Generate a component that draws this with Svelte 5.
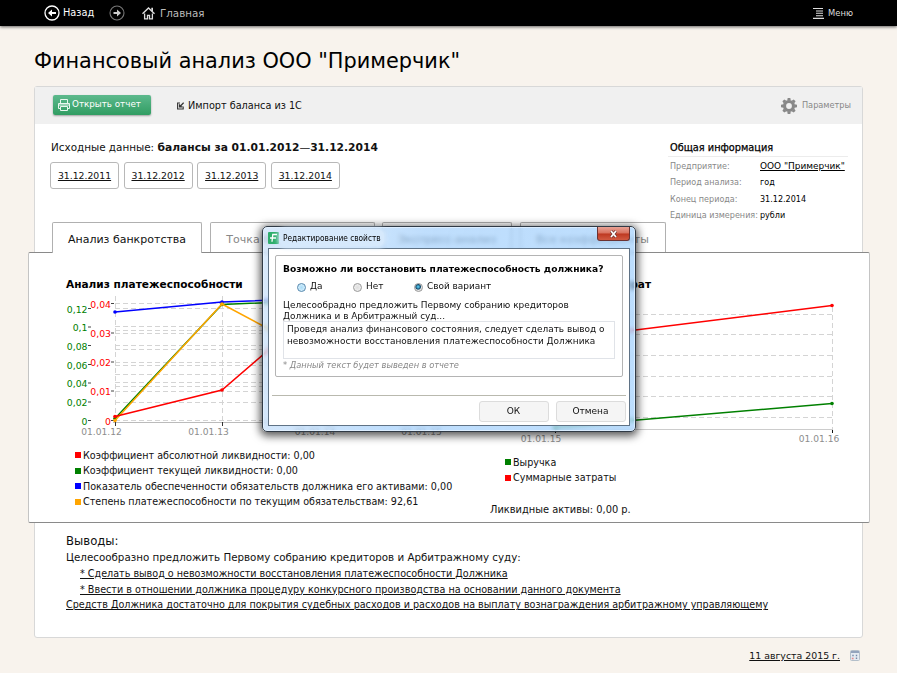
<script>
  const dates = ['31.12.2011', '31.12.2012', '31.12.2013', '31.12.2014'];

  const info = [
    { label: 'Период анализа:', value: 'год' },
    { label: 'Конец периода:', value: '31.12.2014' },
    { label: 'Единица измерения:', value: 'рубли' }
  ];

  const tabs = [
    { title: 'Анализ банкротства', width: 150, active: true },
    { title: 'Точка безубыточности', width: 165 },
    { title: 'Экспресс-анализ', width: 130 },
    { title: 'Все коэффициенты', width: 146 }
  ];

  const solvencyLegend = [
    { color: '#ff0000', text: 'Коэффициент абсолютной ликвидности: 0,00' },
    { color: '#008000', text: 'Коэффициент текущей ликвидности: 0,00' },
    { color: '#0000ff', text: 'Показатель обеспеченности обязательств должника его активами: 0,00' },
    { color: '#ffa500', text: 'Степень платежеспособности по текущим обязательствам: 92,61' }
  ];

  const costLegend = [
    { color: '#008000', text: 'Выручка' },
    { color: '#ff0000', text: 'Суммарные затраты' }
  ];

  const gridLeft = [8.5, 13.5, 31.5, 35.5, 38.5, 50.5, 54.5, 67.5, 70.5, 79.5, 87.5, 91.5, 96.5, 107.5, 125.5];
  const greenAxis = [
    ['0,12', 13.5], ['0,1', 32], ['0,08', 50.5], ['0,06', 69.5], ['0,04', 88], ['0,02', 107], ['0', 125.5]
  ];
  const redAxis = [
    ['0,04', 8.5], ['0,03', 38], ['0,02', 67], ['0,01', 96], ['0', 125.5]
  ];
  const gridRight = [19.5, 39.5, 60.5, 81.5, 101.5, 122.5];

  const series = [
    { color: '#0000ff', points: [[49, 17], [156, 7], [263, 3]] },
    { color: '#008000', points: [[49, 123.5], [156, 9.5], [263, 5]] },
    { color: '#ffa500', points: [[49, 125.5], [156, 9], [263, 66]] },
    { color: '#ff0000', points: [[49, 121.5], [156, 95], [263, 3]] }
  ];

  const costSeries = [
    { color: '#ff0000', points: [[75, 45], [352, 10.5]] },
    { color: '#008000', points: [[75, 132], [352, 108.5]] }
  ];

  const options = ['Да', 'Нет', 'Свой вариант'];
  let selected = $state('Свой вариант');
  let note = $state('Проведя анализ финансового состояния, следует сделать вывод о невозможности восстановления платежеспособности Должника');
</script>

<div class="app">
  <header class="bar">
    <button class="nav back">
      <svg width="16" height="16" viewBox="0 0 16 16"><circle cx="8" cy="8" r="7" fill="none" stroke="#fff" stroke-width="1.3" /><path d="M4 8l4-3.6V7h4v2H8v2.6z" fill="#fff" /></svg>
      <span>Назад</span>
    </button>
    <button class="nav forward" aria-label="Вперёд">
      <svg width="16" height="16" viewBox="0 0 16 16"><circle cx="8" cy="8" r="7" fill="none" stroke="#777" stroke-width="1.1" /><path d="M12 8L8 4.4V7H4.5v2H8v2.6z" fill="#ccc" /></svg>
    </button>
    <button class="nav home">
      <svg width="13" height="13" viewBox="0 0 13 13"><path d="M.5 6.8L6.5 1l6 5.8" fill="none" stroke="#ddd" stroke-width="1.4" /><path d="M9.3.8h1.7v4L9.3 3.2z" fill="#ddd" /><path d="M2.6 6.5v5.3h2.9V8.3h2v3.5h2.9V6.5" fill="none" stroke="#ddd" stroke-width="1.3" /></svg>
      <span>Главная</span>
    </button>
    <button class="nav menu">
      <svg width="11" height="11" viewBox="0 0 11 11"><path d="M0 .5h10M3 3h7M3 5.3h7M3 7.7h7M0 10.4h11" stroke="#ddd" stroke-width="1.1" /></svg>
      <span>Меню</span>
    </button>
  </header>

  <h1>Финансовый анализ ООО "Примерчик"</h1>

  <main class="panel">
    <div class="toolbar">
      <button class="open">
        <svg width="12" height="12" viewBox="0 0 12 12" fill="none" stroke="#e9f7ef" stroke-width="1"><path d="M2.5 4.5v-4h7v4M2.5 9.5h-2v-5h11v5h-2M2.5 7.5h7v4h-7zM1 6h10" /></svg>
        <span>Открыть отчет</span>
      </button>
      <button class="import">
        <svg width="7" height="8" viewBox="0 0 7 8" fill="none" stroke="#333"><path d="M3 1H.6v6h5.6V4.5" stroke-width="1.1" /><path d="M6.6.7L3 4.5M2.5 2.2v2.7h3" stroke-width="1.2" /></svg>
        <span>Импорт баланса из 1С</span>
      </button>
      <button class="params">
        <svg width="16" height="16" viewBox="-8 -8 16 16"><circle r="4.5" fill="none" stroke="#888" stroke-width="3.2" />{#each [0, 45, 90, 135, 180, 225, 270, 315] as angle}<path d="M-1.8-5.5L-1.3-8h2.6l.5 2.5z" fill="#888" transform="rotate({angle})" />{/each}</svg>
        <span>Параметры</span>
      </button>
    </div>

    <section class="summary">
      <div>
        <p class="source">Исходные данные: <b>балансы за 01.01.2012<span class="dash">—</span>31.12.2014</b></p>
        <div class="dates">
          {#each dates as date}<button>{date}</button>{/each}
        </div>
      </div>
      <aside>
        <h2>Общая информация</h2>
        <dl>
          <dt>Предприятие:</dt>
          <dd class="company">ООО "Примерчик"</dd>
          {#each info as row}
            <dt>{row.label}</dt>
            <dd>{row.value}</dd>
          {/each}
        </dl>
      </aside>
    </section>

    <nav class="tabs">
      {#each tabs as tab}
        <button class:active={tab.active} style:width="{tab.width}px">{tab.title}</button>
      {/each}
    </nav>

    <section class="card">
      <div class="col solvency">
        <h3>Анализ платежеспособности</h3>
        <svg class="chart" width="404" height="146" viewBox="0 0 404 146">
          <g stroke="#d4d4d4" stroke-dasharray="5 3">
            {#each gridLeft as y}<line x1="49" x2="380" y1={y} y2={y} />{/each}
            {#each [49.5, 156.5, 263.5] as x}<line x1={x} x2={x} y1="1" y2="127" />{/each}
          </g>
          <path d="M47 127.5h333" stroke="#bbb" />
          <path d="M49.5 127v4M156.5 127v4M263.5 127v4" stroke="#333" />
          <g class="green">
            {#each greenAxis as [label, y]}<text x="21.5" y={y + 4}>{label}</text><path d="M22 {y}h3" />{/each}
          </g>
          <g class="red">
            {#each redAxis as [label, y]}<text x="45" y={y + 4}>{label}</text><path d="M45 {y}h3" />{/each}
          </g>
          {#each series as line}
            <polyline points={line.points.join(' ')} fill="none" stroke={line.color} stroke-width="1.5" />
            {#each line.points as [x, y]}<circle cx={x} cy={y} r="1.8" fill={line.color} />{/each}
          {/each}
          <g class="time"><text x="35.5" y="140">01.01.12</text><text x="142.5" y="140">01.01.13</text><text x="249" y="140">01.01.14</text><text x="355.5" y="140">01.01.15</text></g>
        </svg>
        <ul>
          {#each solvencyLegend as item}<li><i style:background={item.color}></i>{item.text}</li>{/each}
        </ul>
      </div>
      <div class="col costs">
        <h3>Анализ выручки и затрат</h3>
        <svg class="chart" width="372" height="152" viewBox="0 0 372 152">
          <g stroke="#d4d4d4" stroke-dasharray="5 3">
            {#each gridRight as y}<line x1="75" x2="352" y1={y} y2={y} />{/each}
            <line x1="352.5" x2="352.5" y1="12" y2="134" />
          </g>
          <path d="M75 134.5h278" stroke="#ccc" />
          <path d="M75.5 135v3M352.5 135v3" stroke="#111" />
          {#each costSeries as line}
            <polyline points={line.points.join(' ')} fill="none" stroke={line.color} stroke-width="1.5" />
            {#each line.points as [x, y]}<circle cx={x} cy={y} r="1.8" fill={line.color} />{/each}
          {/each}
          <g class="time"><text x="61" y="147">01.01.15</text><text x="339" y="147">01.01.16</text></g>
        </svg>
        <ul>
          {#each costLegend as item}<li><i style:background={item.color}></i>{item.text}</li>{/each}
        </ul>
        <p class="assets">Ликвидные активы: 0,00 р.</p>
      </div>
    </section>

    <section class="conclusions">
      <h4>Выводы:</h4>
      <p class="intro">Целесообразно предложить Первому собранию кредиторов и Арбитражному суду:</p>
      <p class="link sub one">* Сделать вывод о невозможности восстановления платежеспособности Должника</p>
      <p class="link sub two">* Ввести в отношении должника процедуру конкурсного производства на основании данного документа</p>
      <p class="link">Средств Должника достаточно для покрытия судебных расходов и расходов на выплату вознаграждения арбитражному управляющему</p>
    </section>
  </main>

  <footer>
    <span>11 августа 2015 г.</span>
    <svg width="10" height="11" viewBox="0 0 10 11"><rect x=".5" y=".5" width="9" height="10" rx="1" fill="#e4ebf2" stroke="#b4bfca" /><path d="M1 2h8" stroke="#7f93b0" stroke-width="1.6" /><path d="M2.3 5.5h1.4M5.8 5.5h1.4M5.8 8.3h1.4" stroke="#7488a8" stroke-width="1.4" /><path d="M1.8 8.5h1.8" stroke="#e48b8b" stroke-width="1.6" /></svg>
  </footer>

  <div class="dialog" role="dialog" aria-label="Редактирование свойств">
    <div class="titlebar">
      <svg width="11" height="12" viewBox="0 0 11 12"><rect width="11" height="12" rx="1" fill="#2fae6c" /><path d="M9 2.5H4.8L4 9.8M2 6h6" fill="none" stroke="#fff" stroke-width="1.3" /></svg>
      <span>Редактирование свойств</span>
      <button class="close" aria-label="Закрыть">
        <svg width="9" height="8" viewBox="0 0 9 8"><path d="M2 1l5 6M7 1L2 7" stroke="#6d3434" stroke-width="3" /><path d="M2 1l5 6M7 1L2 7" stroke="#fff" stroke-width="1.7" /></svg>
      </button>
    </div>
    <div class="body">
      <fieldset>
        <h5>Возможно ли восстановить платежеспособность должника?</h5>
        <div class="radios">
          {#each options as option}
            <label><input type="radio" name="choice" value={option} bind:group={selected} class:cool={option === 'Да'} />{option}</label>
          {/each}
        </div>
        <p class="lead">Целесообрадно предложить Первому собранию кредиторов<br />Должника и в Арбитражный суд...</p>
        <textarea bind:value={note} spellcheck="false"></textarea>
        <p class="hint">* Данный текст будет выведен в отчете</p>
      </fieldset>
      <hr />
      <div class="actions">
        <button>ОК</button>
        <button>Отмена</button>
      </div>
    </div>
  </div>
</div>

<style>
  :global(body) { background: #f8f3ed; }
  .app {
    position: relative;
    width: 897px;
    height: 673px;
    overflow: hidden;
    background: #f8f3ed;
    color: #111;
    font: 9.6px/15.5px "DejaVu Sans", Verdana, sans-serif;
  }
  .app :is(h1, h2, h3, h4, h5, p, ul, dl, dd, fieldset) { margin: 0; padding: 0; white-space: nowrap; }
  button { font: inherit; color: inherit; padding: 0; margin: 0; border: 0; background: none; box-sizing: border-box; white-space: nowrap; }
  svg { display: block; flex: none; }

  .bar { display: flex; align-items: center; height: 26px; padding: 0 44px; background: #000; box-shadow: 0 1px 3px #0009; }
  .nav { display: flex; align-items: center; gap: 4px; color: #fff; }
  .back { width: 51px; gap: 3px; font-size: 9.8px; }
  .forward { margin-left: 14px; }
  .home { margin-left: 17px; gap: 5px; color: #bbb; font-size: 10.3px; }
  .home span { padding-top: 1px; }
  .menu { margin-left: auto; color: #ddd; font: 8.4px "DejaVu Sans", sans-serif; }

  h1 { padding: 22px 0 0 34px !important; height: 38px; font: 20.85px/27px "DejaVu Sans", Verdana, sans-serif; color: #000; }

  .panel { box-sizing: border-box; width: 829px; height: 552px; margin-left: 34px; border: 1px solid #d8d8d8; border-radius: 3px; background: #fff; }
  .toolbar { display: flex; align-items: center; height: 37px; padding: 0 11px 0 18px; background: #f0f0f0; }
  .open { display: flex; align-items: center; gap: 2px; width: 98px; height: 20px; margin-bottom: 1px; padding: 0 0 0 5px; border-radius: 2px; color: #fff; font-size: 8.75px; background: linear-gradient(#5cb98d, #319d62); box-shadow: 0 1px 2px #0005; }
  .import { display: flex; align-items: center; gap: 4px; margin-left: 26px; padding-top: 1px; font-size: 9.7px; }
  .params { display: flex; align-items: center; gap: 5px; margin-left: auto; color: #888; font-size: 8.2px; }

  .summary { display: flex; justify-content: space-between; height: 98px; padding: 0 14px 0 15px; box-sizing: border-box; }
  .source { padding: 15.5px 0 7px 1px !important; font-size: 10.4px; }
  .source b { font-size: 10.72px; }
  .dash { font-weight: normal; }
  .dates { display: flex; gap: 4.6px; }
  .dates button { width: 69px; height: 27px; border: 1px solid #b8b8b8; border-radius: 3px; font-size: 9.3px; text-decoration: underline; text-underline-offset: 1px; }
  aside { width: 180px; padding-top: 16px; }
  h2 { height: 16px; padding-left: 2px !important; border-bottom: 1px solid #ececec; font: 9.75px/16px "DejaVu Sans", sans-serif; color: #000; -webkit-text-stroke: 0.25px #000; }
  dl { display: grid; grid-template-columns: 90px 1fr; grid-auto-rows: 16.4px; padding: 1px 0 0 2px !important; font: 8.95px/16px "DejaVu Sans Condensed", "DejaVu Sans", sans-serif; color: #000; }
  dt { color: #888; white-space: nowrap; }
  .company { font-family: "DejaVu Sans", sans-serif; text-decoration: underline; text-underline-offset: 1px; }

  .tabs { display: flex; gap: 7.5px; height: 30px; padding-left: 17px; }
  .tabs button { height: 30px; border: 1px solid #b0b0b0; border-bottom: 0; border-radius: 2px 2px 0 0; background: #fff; color: #888; font-size: 11px; padding-top: 4px; }
  .tabs .active { position: relative; z-index: 1; height: 31px; padding-top: 3px; color: #111; }

  .card { display: flex; box-sizing: border-box; width: 842px; height: 271px; margin: 0 0 0 -7px; padding: 23px 0 0 37px; border: 1px solid #c4c4c4; border-top-color: #8a8a8a; border-bottom-color: #8a8a8a; border-radius: 2px; background: #fff; }
  .col { flex: none; width: 414px; }
  h3 { height: 19px; font: bold 10.57px/16px "DejaVu Sans", sans-serif; color: #000; }
  .costs h3 { padding-left: 16px !important; }
  .chart text { font: 9.3px "DejaVu Sans", sans-serif; }
  .green text { fill: #008000; text-anchor: end; }
  .red text { fill: #ff0000; text-anchor: end; }
  .green path, .red path { stroke: #444; }
  .chart .time text { fill: #8d8d8d; text-anchor: middle; font-size: 9.1px; }
  ul { list-style: none; padding: 6.5px 0 0 9px !important; }
  .costs ul { padding: 7.5px 0 0 25px !important; }
  li { display: flex; align-items: center; gap: 2px; height: 15.5px; font-size: 9.61px; }
  li i { width: 6px; height: 6px; }
  .assets { padding: 16px 0 0 10px !important; font-size: 9.85px; }

  .conclusions { padding: 10px 0 0 31px; line-height: 15.8px; }
  h4 { height: 17px; font: 11.7px/16px "DejaVu Sans", sans-serif; }
  .intro { font-size: 10.31px; }
  .link { text-decoration: underline; text-underline-offset: 1px; }
  .sub { padding-left: 14px !important; }
  .two { font-size: 9.65px; }

  footer { display: flex; justify-content: flex-end; align-items: center; gap: 10px; height: 15px; padding: 10px 37px 0 0; font-size: 9.4px; }
  footer span { text-decoration: underline; text-underline-offset: 1px; }

  .dialog {
    position: absolute;
    left: 262px;
    top: 226px;
    box-sizing: border-box;
    width: 374px;
    height: 206px;
    padding: 0 5px 5px;
    border: 1px solid #303a45;
    border-radius: 5px;
    background: linear-gradient(100deg, #c4ddf8a0, #8ec5fb90 40%, #94c9fca0);
    backdrop-filter: blur(2px);
    box-shadow: inset 0 0 0 1px #e8f4ffb0, 0 2px 8px 2px #000000a8;
  }
  .titlebar { display: flex; align-items: center; gap: 4px; height: 21px; color: #000; font: 8.25px/16px "DejaVu Sans Condensed", sans-serif; }
  .titlebar span { padding: 0 3px; margin: 0 -3px; border-radius: 6px; background: #d6e9fc; box-shadow: 0 0 4px 2px #d6e9fc; }
  .close { display: flex; align-items: center; justify-content: center; align-self: flex-start; width: 33px; height: 14px; margin-left: auto; border: 1px solid #6b3232; border-top: 0; border-radius: 0 0 3px 3px; background: linear-gradient(#e8a295, #d8705d 48%, #bd3720 52%, #d15a42); }
  .body { box-sizing: border-box; height: 178px; padding: 6px 7px 0 6px; border: 1px solid #5f7285; background: #fff; }
  fieldset { box-sizing: border-box; width: 348px; height: 122px; padding: 5px 7px 0 !important; border: 1px solid #b4b4b4; border-radius: 2px; }
  h5 { font: bold 9.13px/16px "DejaVu Sans", sans-serif; color: #000; }
  .radios { display: flex; gap: 30.5px; height: 17px; margin: 1.5px 0 4.5px 14px; }
  label { display: flex; align-items: center; gap: 4px; font-size: 8.95px; }
  input { appearance: none; width: 9px; height: 9px; margin: 0; border: 1px solid #999; border-radius: 50%; background: radial-gradient(#ddd, #f4f4f4); }
  input.cool { border-color: #5588ae; background: radial-gradient(#a9dcf8, #e5f5fd); }
  input:checked { border-color: #999; background: radial-gradient(circle at 45% 40%, #53c0e8 0 10%, #174f70 42%, #e5e5e5 58%); }
  .lead { font-size: 8.93px; line-height: 10.7px; }
  textarea { display: block; box-sizing: border-box; width: 332px; height: 38px; margin: 0; padding: 2px 0 0 3px; border: 1px solid #e0e3e8; outline: 0; resize: none; overflow: hidden; background: #fff; color: #111; font: 8.95px/11.5px "DejaVu Sans", sans-serif; }
  .hint { font-size: 8.25px; line-height: 12px; font-style: italic; color: #888; }
  hr { height: 1px; margin: 18px -4px 5px -3px; border: 0; background: #b9b9ae; }
  .actions { display: flex; justify-content: flex-end; gap: 7px; margin-right: -3.5px; }
  .actions button { width: 70px; height: 21px; border: 1px solid #dcdcdc; border-radius: 3px; background: #f5f5f5; font-size: 9px; }
</style>
